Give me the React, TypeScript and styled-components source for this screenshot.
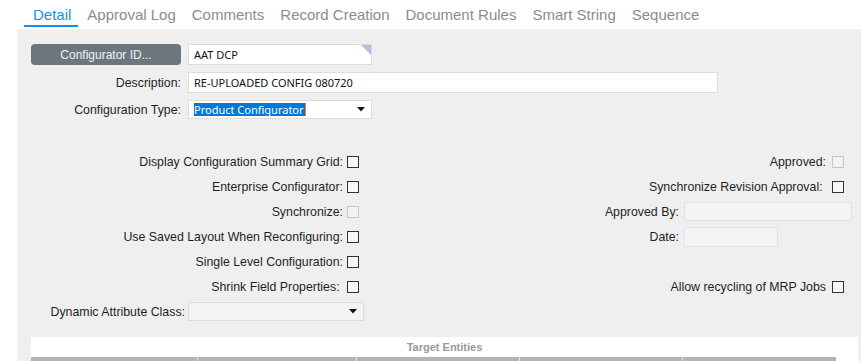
import React from 'react';
import styled, { createGlobalStyle, css } from 'styled-components';

const GlobalStyle = createGlobalStyle`
	html,
	body {
		margin: 0;
		padding: 0;
		height: 100%;
		overflow: hidden;
		background: #ffffff;
		font-family: 'Liberation Sans', Arial, sans-serif;
	}
`;

const tabs = ['Detail', 'Approval Log', 'Comments', 'Record Creation', 'Document Rules', 'Smart String', 'Sequence'];

// left hand check boxes of the detail form
const leftOptions = [
	{ label: 'Display Configuration Summary Grid:' },
	{ label: 'Enterprise Configurator:' },
	{ label: 'Synchronize:', disabled: true },
	{ label: 'Use Saved Layout When Reconfiguring:' },
	{ label: 'Single Level Configuration:' },
	{ label: 'Shrink Field Properties:\u00a0' },
];

const entityColumns = [167, 159, 163, 163, 153];

function Arrow() {
	return (
		<svg width="8" height="5" viewBox="0 0 8 5">
			<path d="M0 0 H8 L4 4.5 Z" fill="#111" />
		</svg>
	);
}

function App() {
	return (
		<>
			<GlobalStyle />
			<Page>
				<TabBar>
					{tabs.map((tab, i) => (
						<Tab key={tab} $active={i === 0}>
							{tab}
						</Tab>
					))}
				</TabBar>

				<Panel>
					<HeaderForm>
						<LookupButton>Configurator ID...</LookupButton>
						<TextBox $width={184} $height={21}>
							AAT DCP
							<LookupCorner />
						</TextBox>

						<FieldLabel>Description:</FieldLabel>
						<TextBox $width={530} $height={21}>
							RE-UPLOADED CONFIG 080720
						</TextBox>

						<FieldLabel>Configuration Type:</FieldLabel>
						<SelectBox $width={184}>
							<Selected>Product Configurator</Selected>
							<Arrow />
						</SelectBox>
					</HeaderForm>

					<OptionsArea>
						<LeftOptions>
							{leftOptions.map(option => (
								<React.Fragment key={option.label}>
									<OptionLabel>{option.label}</OptionLabel>
									<CheckBox $disabled={option.disabled} />
								</React.Fragment>
							))}
						</LeftOptions>

						<RightOptions>
							<CheckRow>
								<OptionLabel>Approved:</OptionLabel>
								<CheckBox $disabled />
							</CheckRow>
							<CheckRow>
								<OptionLabel>Synchronize Revision Approval:{'\u00a0'}</OptionLabel>
								<CheckBox />
							</CheckRow>
							<OptionLabel>Approved By:</OptionLabel>
							<ReadOnlyBox $width={168} $height={19} />
							<OptionLabel>Date:</OptionLabel>
							<ReadOnlyBox $width={94} $height={20} $tint />
							<CheckRow />
							<CheckRow>
								<OptionLabel>Allow recycling of MRP Jobs</OptionLabel>
								<CheckBox />
							</CheckRow>
						</RightOptions>
					</OptionsArea>

					<AttributeRow>
						<FieldLabel>Dynamic Attribute Class:</FieldLabel>
						<SelectBox $width={176} $muted>
							<span />
							<Arrow />
						</SelectBox>
					</AttributeRow>

					<EntitiesGrid>
						<EntitiesTitle>Target Entities</EntitiesTitle>
						<EntitiesHeader>
							{entityColumns.map((width, i) => (
								<HeaderCell key={i} style={{ width }} />
							))}
						</EntitiesHeader>
					</EntitiesGrid>
				</Panel>
			</Page>
		</>
	);
}

export default App;

const inputText = css`
	font-family: 'Noto Sans', 'Open Sans', sans-serif;
	font-size: 11px;
	color: #111;
`;

const labelText = css`
	font-size: 12.35px;
	color: #1f1f1f;
	white-space: nowrap;
`;

const Page = styled.div`
	width: 861px;
	height: 361px;
	overflow: hidden;
`;

const TabBar = styled.nav`
	display: flex;
	height: 29px;
	padding-left: 24px;
	box-sizing: border-box;
`;

const Tab = styled.div<{ $active?: boolean }>`
	height: 27px;
	box-sizing: border-box;
	padding: 5px 7px 0 9px;
	font-size: 15px;
	line-height: 19px;
	color: ${p => (p.$active ? '#1b8fe2' : '#8c8c8c')};
	border-bottom: 2px solid ${p => (p.$active ? '#1b8fe2' : 'transparent')};
`;

const Panel = styled.section`
	margin-left: 17px;
	padding: 15px 3px 0 14px;
	background: #efefef;
	height: 332px;
	box-sizing: border-box;
`;

const HeaderForm = styled.div`
	display: grid;
	grid-template-columns: 150px auto;
	grid-template-rows: 21px 21px 19px;
	column-gap: 7px;
	row-gap: 7px;
	align-items: center;
	justify-items: start;
`;

const FieldLabel = styled.label`
	${labelText}
	justify-self: end;
`;

const LookupButton = styled.button`
	width: 150px;
	height: 21px;
	border: none;
	border-radius: 4px;
	background: #6e767d;
	color: #eef0f2;
	font-family: 'Liberation Sans', Arial, sans-serif;
	font-size: 12px;
	padding: 0;
`;

const TextBox = styled.div<{ $width: number; $height: number }>`
	${inputText}
	position: relative;
	width: ${p => p.$width}px;
	height: ${p => p.$height}px;
	box-sizing: border-box;
	background: #ffffff;
	border: 1px solid #dddddd;
	padding-left: 5px;
	display: flex;
	align-items: center;
`;

const LookupCorner = styled.span`
	position: absolute;
	top: 0;
	right: 0;
	width: 0;
	height: 0;
	border-top: 10px solid #aac3e3;
	border-left: 10px solid transparent;
`;

const SelectBox = styled.div<{ $width: number; $muted?: boolean }>`
	${inputText}
	width: ${p => p.$width}px;
	height: 19px;
	box-sizing: border-box;
	background: ${p => (p.$muted ? '#f3f3f3' : '#ffffff')};
	border: 1px solid #dddddd;
	padding: 0 6px 0 5px;
	display: flex;
	align-items: center;
	justify-content: space-between;
`;

const Selected = styled.span`
	background: #0078d7;
	color: #ffffff;
	line-height: 13px;
	padding-right: 1px;
	border-right: 1px solid #f0781e;
`;

const OptionsArea = styled.div`
	display: flex;
	margin-top: 30px;
`;

const LeftOptions = styled.div`
	display: grid;
	grid-template-columns: 312px 12px;
	grid-auto-rows: 25px;
	column-gap: 4px;
	align-items: center;
`;

const RightOptions = styled.div`
	flex: 1;
	display: grid;
	grid-template-columns: 1fr 168px;
	grid-auto-rows: 25px;
	column-gap: 5px;
	align-items: center;
	justify-items: start;
	margin-right: 6px;
`;

const CheckRow = styled.div`
	grid-column: 1 / -1;
	justify-self: stretch;
	display: flex;
	justify-content: flex-end;
	align-items: center;
	gap: 6px;
	padding-right: 8px;
`;

const OptionLabel = styled.span`
	${labelText}
	justify-self: end;
	text-align: right;
`;

const CheckBox = styled.span<{ $disabled?: boolean }>`
	width: 12px;
	height: 12px;
	box-sizing: border-box;
	border: 1px solid ${p => (p.$disabled ? '#c6c6c6' : '#333333')};
	background: ${p => (p.$disabled ? '#f2f2f2' : '#f7f7f7')};
`;

const ReadOnlyBox = styled.div<{ $width: number; $height: number; $tint?: boolean }>`
	width: ${p => p.$width}px;
	height: ${p => p.$height}px;
	box-sizing: border-box;
	background: #f4f4f4;
	border: 1px solid ${p => (p.$tint ? '#e1e1f0' : '#e0e0e0')};
`;

const AttributeRow = styled.div`
	display: grid;
	grid-template-columns: 154px 176px;
	column-gap: 3px;
	height: 25px;
	align-items: center;
`;

const EntitiesGrid = styled.div`
	margin-top: 13px;
	width: 827px;
	background: #ffffff;
`;

const EntitiesTitle = styled.div`
	height: 20px;
	line-height: 20px;
	text-align: center;
	font-size: 11px;
	font-weight: bold;
	color: #9a9a9a;
`;

const EntitiesHeader = styled.div`
	display: flex;
	height: 22px;
`;

const HeaderCell = styled.div`
	box-sizing: border-box;
	background: #b4b4b4;
	border-right: 1px solid #e4e4e4;
	&:last-child {
		border-right: none;
	}
`;
